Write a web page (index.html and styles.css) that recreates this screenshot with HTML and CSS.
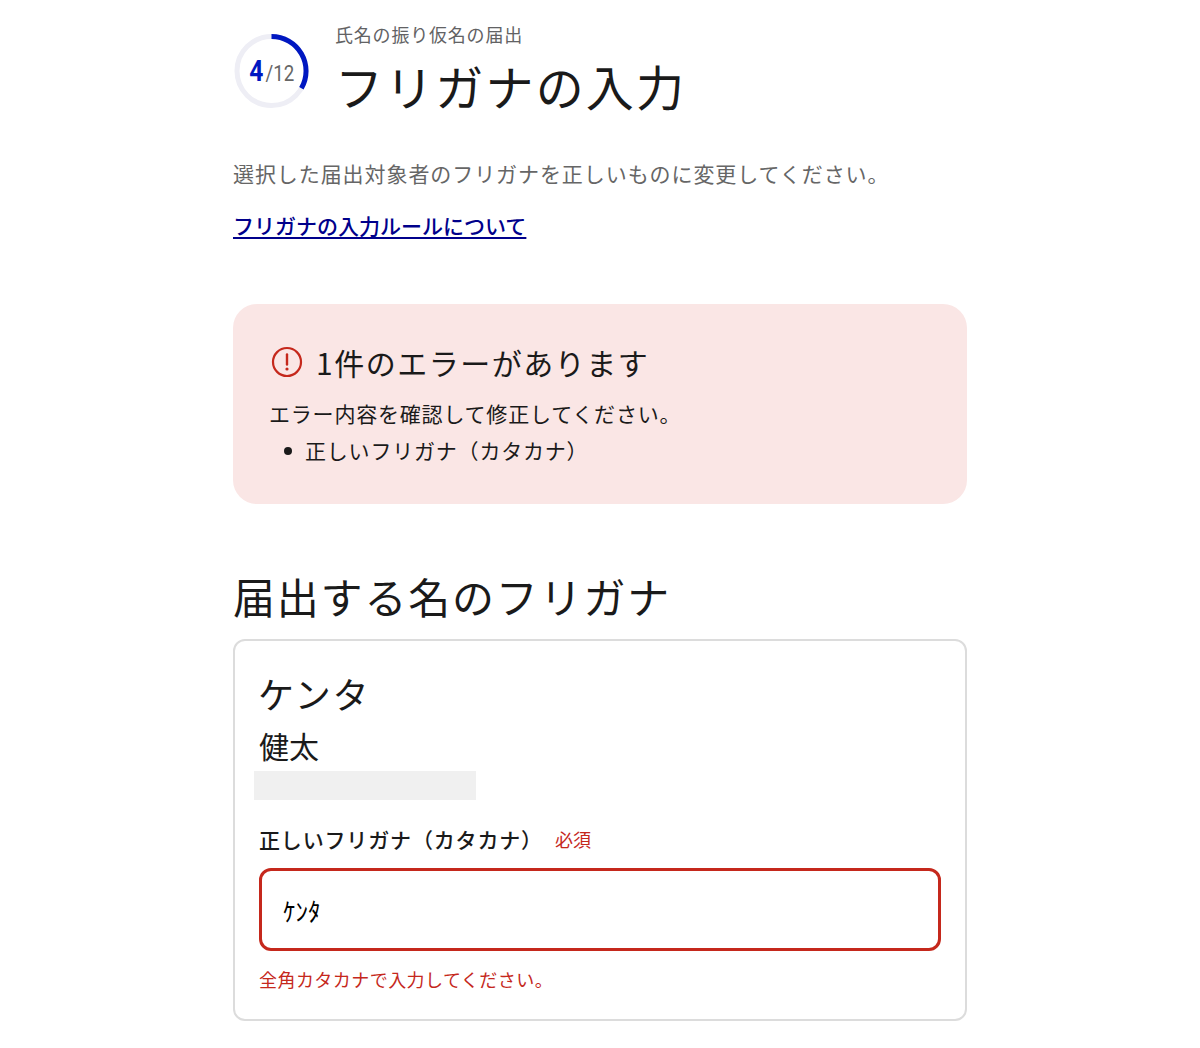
FILE: index.html
```html
<!DOCTYPE html>
<html lang="ja">
<head>
<meta charset="utf-8">
<title>フリガナの入力</title>
<link rel="stylesheet" href="styles.css">
</head>
<body>
<main class="page">
  <header class="head">
    <div class="ring">
      <svg class="ring-svg" width="78" height="78" viewBox="0 0 78 78" aria-hidden="true">
        <circle cx="38.5" cy="39" r="34.5" fill="none" stroke="#eeeef5" stroke-width="5"/>
        <path d="M38.5 4.5 A34.5 34.5 0 0 1 68.4 56.3" fill="none" stroke="#0017c1" stroke-width="5"/>
      </svg>
      <div class="ring-label"><span class="ring-num">4</span><span class="ring-total">/12</span></div>
    </div>
    <div class="head-text">
      <p class="eyebrow">氏名の振り仮名の届出</p>
      <h1 class="title">フリガナの入力</h1>
    </div>
  </header>

  <p class="desc">選択した届出対象者のフリガナを正しいものに変更してください。</p>
  <p class="link-row"><a class="link" href="#">フリガナの入力ルールについて</a></p>

  <section class="alert">
    <div class="alert-head">
      <svg class="alert-icon" width="32" height="32" viewBox="0 0 32 32" aria-hidden="true">
        <circle cx="16" cy="16" r="14" fill="none" stroke="#c5281c" stroke-width="2.2"/>
        <path d="M16 8.5V18.5" fill="none" stroke="#c5281c" stroke-width="2.4" stroke-linecap="round"/>
        <circle cx="16" cy="23" r="1.6" fill="#c5281c"/>
      </svg>
      <h2 class="alert-title">1件のエラーがあります</h2>
    </div>
    <p class="alert-text">エラー内容を確認して修正してください。</p>
    <ul class="alert-list">
      <li>正しいフリガナ（カタカナ）</li>
    </ul>
  </section>

  <h2 class="section-title">届出する名のフリガナ</h2>
  <section class="card">
    <p class="kana">ケンタ</p>
    <p class="kanji">健太</p>
    <div class="redacted"></div>
    <div class="label-row">
      <span class="label">正しいフリガナ（カタカナ）</span>
      <span class="required">必須</span>
    </div>
    <div class="input">ｹﾝﾀ</div>
    <p class="error">全角カタカナで入力してください。</p>
  </section>
</main>
</body>
</html>
```

FILE: styles.css
```css
* { box-sizing: border-box; }
html, body { margin: 0; padding: 0; background: #fff; }
body {
  font-family: "Noto Sans CJK JP", "Noto Sans", sans-serif;
  color: #1a1a1a;
  letter-spacing: 0.05em;
}
p, h1, h2, ul { margin: 0; padding: 0; font-weight: 400; }
.page { width: 734px; margin: 0 auto; height: 1048px; overflow: hidden; }

.head { display: flex; align-items: flex-start; padding-top: 21px; }
.ring { position: relative; width: 78px; height: 78px; margin-top: 11px; flex: none; }
.ring-svg { display: block; }
.ring-label {
  position: absolute; inset: 0;
  display: flex; align-items: baseline; justify-content: center;
  padding-top: 21px; padding-left: 1px;
  font-family: "Roboto", sans-serif; letter-spacing: 0;
}
.ring-num { font-size: 29px; line-height: 36px; font-weight: 700; color: #0017c1; transform: scaleX(.85); }
.ring-total { font-size: 22px; line-height: 36px; color: #666; transform: scaleX(.85); margin-left: -2px; }
.head-text { margin-left: 25px; }
.eyebrow { font-size: 18px; line-height: 27px; color: #626264; margin-left: -1px; }
.title { font-size: 48px; line-height: 60px; margin-left: -1px; margin-top: 7px; letter-spacing: 0.045em; }

.desc { font-size: 21px; line-height: 32px; color: #666; margin-top: 42px; letter-spacing: 0.044em; }
.link-row { margin-top: 20px; font-size: 21px; line-height: 32px; letter-spacing: 0; font-weight: 500; }
.link { color: #00008b; text-decoration: underline; text-underline-offset: 3px; }

.alert {
  background: #fae6e5; border-radius: 24px; height: 200px;
  margin-top: 63px; padding: 35px 36px 0;
}
.alert-head { display: flex; align-items: center; height: 46px; }
.alert-icon { margin-left: 2px; margin-right: 13px; }
.alert-title { font-size: 30px; line-height: 46px; letter-spacing: 0.05em; }
.alert-text { font-size: 21px; line-height: 32px; margin-top: 12px; }
.alert-list { list-style: none; margin-top: 5px; font-size: 21px; line-height: 32px; }
.alert-list li { position: relative; padding-left: 36px; }
.alert-list li::before {
  content: ""; position: absolute; left: 15px; top: 13px;
  width: 8px; height: 8px; border-radius: 50%; background: #1a1a1a;
}

.section-title { font-size: 42px; line-height: 60px; margin-top: 62px; letter-spacing: 0.043em; }
.card {
  height: 382px; margin-top: 13px;
  border: 2px solid #dcdcdc; border-radius: 12px;
  padding: 26px 24px 0;
}
.kana { font-size: 36px; line-height: 52px; letter-spacing: 0.05em; margin-left: -1px; }
.kanji { font-size: 30px; line-height: 44px; letter-spacing: 0; margin-top: 4px; }
.redacted { width: 222px; height: 29px; background: #f0f0f0; margin: 4px 0 0 -5px; }
.label-row { display: flex; align-items: center; height: 32px; margin-top: 23px; }
.label { font-size: 21px; line-height: 32px; font-weight: 500; letter-spacing: 0.04em; }
.required { font-size: 18px; line-height: 32px; color: #c5281c; margin-left: 12px; letter-spacing: 0; }
.input {
  height: 83px; margin-top: 13px;
  border: 3px solid #c5281c; border-radius: 12px;
  padding: 0 21px;
  display: flex; align-items: center;
  font-size: 25px; letter-spacing: 0; color: #000;
}
.error { font-size: 18px; line-height: 27px; color: #c5281c; margin-top: 15px; letter-spacing: 0.025em; }
```
